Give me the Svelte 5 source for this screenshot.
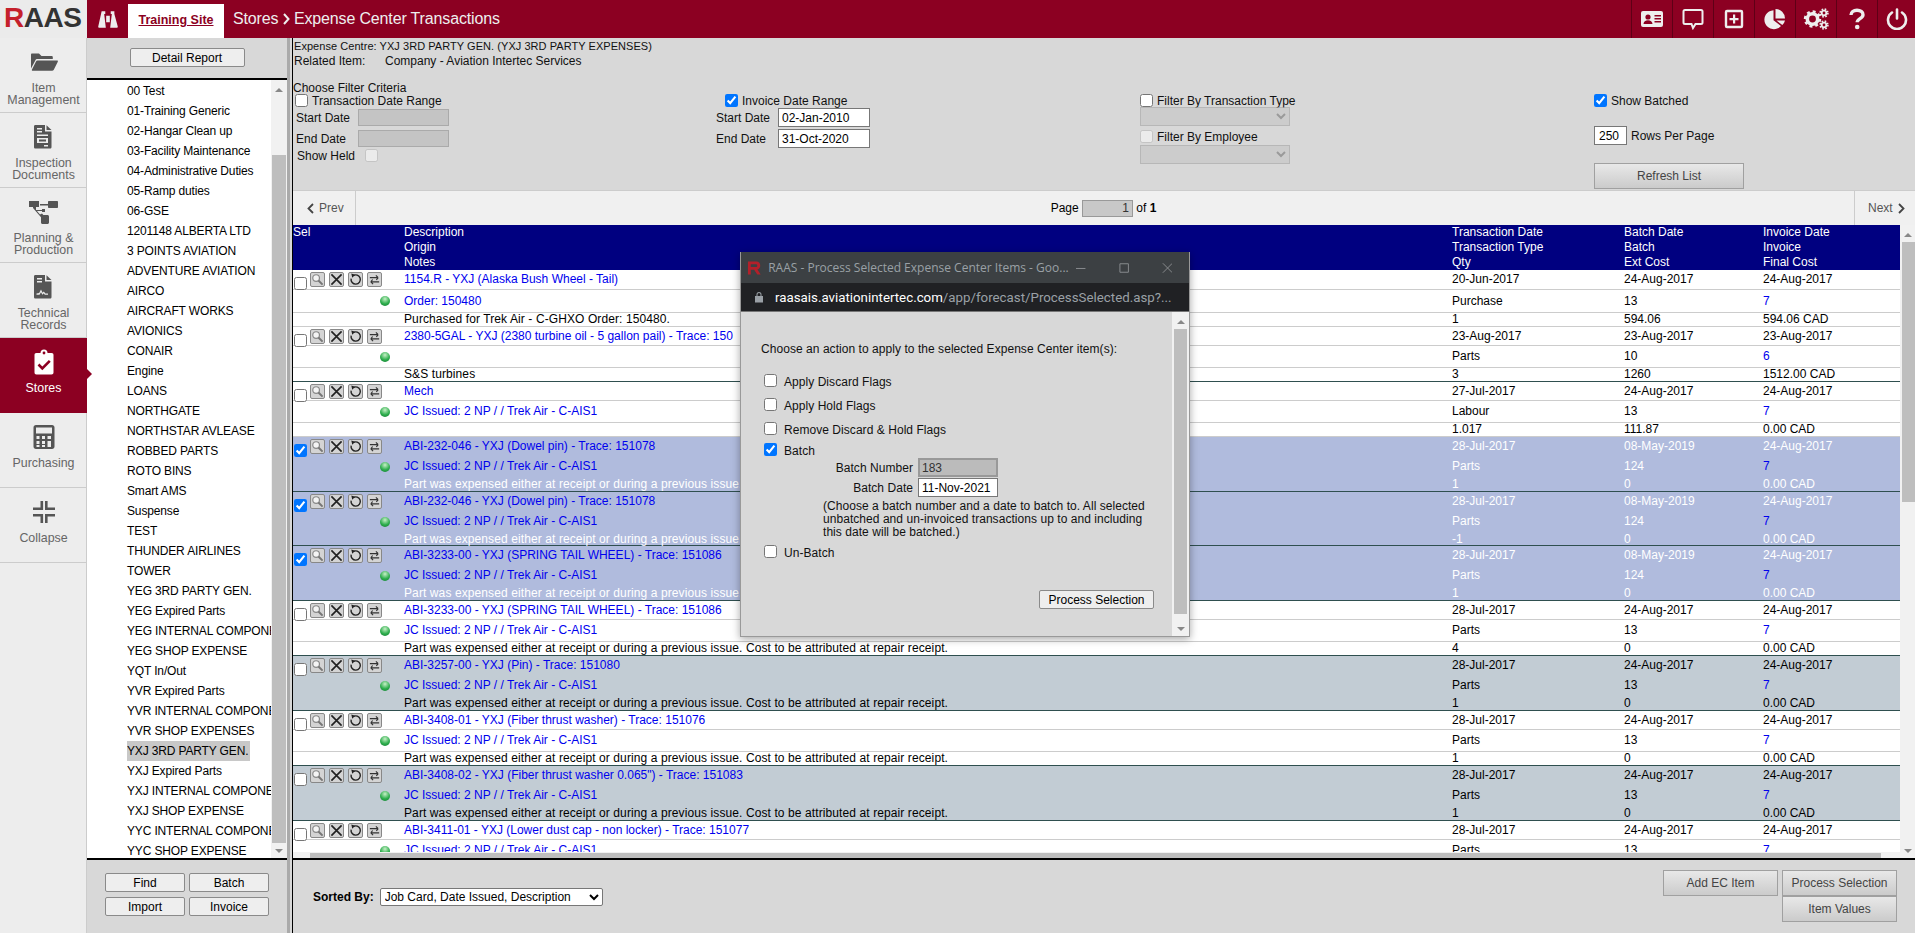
<script lang="ts">
	const sections = [
		{ label: ['Item', 'Management'], icon: 'folder' },
		{ label: ['Inspection', 'Documents'], icon: 'doc' },
		{ label: ['Planning &', 'Production'], icon: 'plan' },
		{ label: ['Technical', 'Records'], icon: 'chart' },
		{ label: ['Stores'], icon: 'clip', active: true },
		{ label: ['Purchasing'], icon: 'calc' },
		{ label: ['Collapse'], icon: 'collapse' }
	];

	const centres = [
		'00 Test', '01-Training Generic', '02-Hangar Clean up', '03-Facility Maintenance',
		'04-Administrative Duties', '05-Ramp duties', '06-GSE', '1201148 ALBERTA LTD',
		'3 POINTS AVIATION', 'ADVENTURE AVIATION', 'AIRCO', 'AIRCRAFT WORKS', 'AVIONICS',
		'CONAIR', 'Engine', 'LOANS', 'NORTHGATE', 'NORTHSTAR AVLEASE', 'ROBBED PARTS',
		'ROTO BINS', 'Smart AMS', 'Suspense', 'TEST', 'THUNDER AIRLINES', 'TOWER',
		'YEG 3RD PARTY GEN.', 'YEG Expired Parts', 'YEG INTERNAL COMPONENTS', 'YEG SHOP EXPENSE',
		'YQT In/Out', 'YVR Expired Parts', 'YVR INTERNAL COMPONENTS', 'YVR SHOP EXPENSES',
		'YXJ 3RD PARTY GEN.', 'YXJ Expired Parts', 'YXJ INTERNAL COMPONENTS', 'YXJ SHOP EXPENSE',
		'YYC INTERNAL COMPONENTS', 'YYC SHOP EXPENSE'
	];

	const jc = 'JC Issued: 2 NP / / Trek Air - C-AIS1';
	const part = 'Part was expensed either at receipt or during a previous issue.';
	const partLong = part + ' Cost to be attributed at repair receipt.';

	const rows = [
		{ kind: 'first', desc: '1154.R - YXJ (Alaska Bush Wheel - Tail)', origin: 'Order: 150480', note: 'Purchased for Trek Air - C-GHXO Order: 150480.', date: '20-Jun-2017', type: 'Purchase', qty: '1', bdate: '24-Aug-2017', batch: '13', ext: '594.06', idate: '24-Aug-2017', inv: '7', cost: '594.06 CAD' },
		{ kind: '', desc: '2380-5GAL - YXJ (2380 turbine oil - 5 gallon pail) - Trace: 150', origin: '', note: 'S&S turbines', date: '23-Aug-2017', type: 'Parts', qty: '3', bdate: '23-Aug-2017', batch: '10', ext: '1260', idate: '23-Aug-2017', inv: '6', cost: '1512.00 CAD' },
		{ kind: 'lt', desc: 'Mech', origin: jc, note: '', date: '27-Jul-2017', type: 'Labour', qty: '1.017', bdate: '24-Aug-2017', batch: '13', ext: '111.87', idate: '24-Aug-2017', inv: '7', cost: '0.00 CAD' },
		{ kind: 'sel', desc: 'ABI-232-046 - YXJ (Dowel pin) - Trace: 151078', origin: jc, note: part, date: '28-Jul-2017', type: 'Parts', qty: '1', bdate: '08-May-2019', batch: '124', ext: '0', idate: '24-Aug-2017', inv: '7', cost: '0.00 CAD' },
		{ kind: 'sel short', desc: 'ABI-232-046 - YXJ (Dowel pin) - Trace: 151078', origin: jc, note: part, date: '28-Jul-2017', type: 'Parts', qty: '-1', bdate: '08-May-2019', batch: '124', ext: '0', idate: '24-Aug-2017', inv: '7', cost: '0.00 CAD' },
		{ kind: 'sel', desc: 'ABI-3233-00 - YXJ (SPRING TAIL WHEEL) - Trace: 151086', origin: jc, note: part, date: '28-Jul-2017', type: 'Parts', qty: '1', bdate: '08-May-2019', batch: '124', ext: '0', idate: '24-Aug-2017', inv: '7', cost: '0.00 CAD' },
		{ kind: '', desc: 'ABI-3233-00 - YXJ (SPRING TAIL WHEEL) - Trace: 151086', origin: jc, note: partLong, date: '28-Jul-2017', type: 'Parts', qty: '4', bdate: '24-Aug-2017', batch: '13', ext: '0', idate: '24-Aug-2017', inv: '7', cost: '0.00 CAD' },
		{ kind: 'alt', desc: 'ABI-3257-00 - YXJ (Pin) - Trace: 151080', origin: jc, note: partLong, date: '28-Jul-2017', type: 'Parts', qty: '1', bdate: '24-Aug-2017', batch: '13', ext: '0', idate: '24-Aug-2017', inv: '7', cost: '0.00 CAD' },
		{ kind: '', desc: 'ABI-3408-01 - YXJ (Fiber thrust washer) - Trace: 151076', origin: jc, note: partLong, date: '28-Jul-2017', type: 'Parts', qty: '1', bdate: '24-Aug-2017', batch: '13', ext: '0', idate: '24-Aug-2017', inv: '7', cost: '0.00 CAD' },
		{ kind: 'alt', desc: 'ABI-3408-02 - YXJ (Fiber thrust washer 0.065") - Trace: 151083', origin: jc, note: partLong, date: '28-Jul-2017', type: 'Parts', qty: '1', bdate: '24-Aug-2017', batch: '13', ext: '0', idate: '24-Aug-2017', inv: '7', cost: '0.00 CAD' },
		{ kind: '', desc: 'ABI-3411-01 - YXJ (Lower dust cap - non locker) - Trace: 151077', origin: jc, note: partLong, date: '28-Jul-2017', type: 'Parts', qty: '1', bdate: '24-Aug-2017', batch: '13', ext: '0', idate: '24-Aug-2017', inv: '7', cost: '0.00 CAD' }
	];
</script>

<div class="page">
	<header class="top">
		<div class="logo"><span class="logo-r">R</span>AAS</div>
		<div class="binoc">
			<svg width="20" height="19" viewBox="0 0 22 20"><path fill="#eee" d="M4 1h4v3h-1.200L8.600 19H1.200c-.6 0-1-.4-1-1zM14 1h4v3l3.800 14c0 .6-.4 1-1 1h-7.400L15.200 4H14zM9 6h4v7H9z"/></svg>
		</div>
		<div class="tab">Training Site</div>
		<div class="title">Stores <svg class="crumb" width="7" height="12" viewBox="0 0 7 12"><path fill="none" stroke="#eee" stroke-width="2" d="M1 1l4.500 5L1 11"/></svg> Expense Center Transactions</div>
		<nav class="tools">
			<button aria-label="Contact card"><svg width="24" height="20" viewBox="0 0 24 20"><rect x="1" y="2" width="22" height="16" rx="2" fill="#eee"/><circle cx="8" cy="8" r="2.600" fill="#8c0022"/><path fill="#8c0022" d="M3.500 15c0-2.500 2-3.800 4.500-3.800s4.500 1.300 4.500 3.800zM14.500 6h6.500v1.500h-6.500zM14.500 9h6.500v1.500h-6.500zM14.500 12h6.500v1.500h-6.500z"/></svg></button>
			<button aria-label="Messages"><svg width="22" height="22" viewBox="0 0 22 22"><path fill="none" stroke="#eee" stroke-width="2" d="M3 2h16a1.500 1.500 0 0 1 1.500 1.500v11A1.500 1.500 0 0 1 19 16h-5.500l-2.500 4-1.500-4H3a1.500 1.500 0 0 1-1.500-1.500v-11A1.500 1.500 0 0 1 3 2z"/></svg></button>
			<button aria-label="Add"><svg width="20" height="20" viewBox="0 0 20 20"><rect x="2" y="2" width="16" height="16" rx="1" fill="none" stroke="#eee" stroke-width="2.400"/><path fill="#eee" d="M9 5.500h2.200V9h3.300v2.200h-3.300v3.300H9v-3.300H5.500V9H9z"/></svg></button>
			<button aria-label="Reports"><svg width="24" height="22" viewBox="0 0 24 22"><path fill="#eee" d="M10.500 2.200A9.500 9.500 0 1 0 18 18l-7.500-5.800zM12.500 1a9.500 9.500 0 0 1 9.500 9.500h-9.500zM13.500 12.500h8.500a9 9 0 0 1-2.700 4.600z"/></svg></button>
			<button aria-label="Settings"><svg width="26" height="22" viewBox="0 0 26 22"><circle cx="9.500" cy="11" r="5.200" fill="none" stroke="#eee" stroke-width="3.600"/><circle cx="9.500" cy="11" r="7.400" fill="none" stroke="#eee" stroke-width="2.600" stroke-dasharray="2.900 2.900"/><circle cx="21" cy="5" r="2.300" fill="none" stroke="#eee" stroke-width="1.800"/><circle cx="21" cy="5" r="3.900" fill="none" stroke="#eee" stroke-width="1.600" stroke-dasharray="1.600 1.500"/><circle cx="21" cy="17" r="2.300" fill="none" stroke="#eee" stroke-width="1.800"/><circle cx="21" cy="17" r="3.900" fill="none" stroke="#eee" stroke-width="1.600" stroke-dasharray="1.600 1.500"/></svg></button>
			<button aria-label="Help"><svg width="16" height="22" viewBox="0 0 16 22"><path fill="none" stroke="#eee" stroke-width="3.400" d="M2 7c0-3 2.500-4.800 6-4.800s6 1.800 6 4.500c0 4-5.800 3.800-5.800 7.600"/><circle cx="8.200" cy="19" r="2.300" fill="#eee"/></svg></button>
			<button aria-label="Log out"><svg width="22" height="22" viewBox="0 0 22 22"><path fill="none" stroke="#eee" stroke-width="2.600" stroke-linecap="round" d="M6 4.500a9 9 0 1 0 10 0M11 1.500v9"/></svg></button>
		</nav>
	</header>

	<div class="body">
		<aside class="side">
			{#each sections as s}
				<div class="side-item" class:active={s.active}>
					<svg class="side-icon" width="32" height="26" viewBox="0 0 32 26">
						{#if s.icon === 'folder'}
							<path d="M3 4.500h8l2.500 2.500h10c.8 0 1.300.5 1.300 1.300V10H9.500c-1 0-1.800.5-2.200 1.400L3 19.500V5.500c0-.5.400-1 1-1zM9.500 11.500H29c.8 0 1.100.6.800 1.200l-4 8c-.4.700-1 1-1.800 1H4.800c-.8 0-1.200-.6-.8-1.300l4-7.900c.3-.6.800-1 1.500-1z"/>
						{:else if s.icon === 'doc'}
							<path d="M7.500 1H17v6.500h6.500V23c0 1-.6 1.500-1.500 1.500H7.500C6.500 24.500 6 24 6 23V2.500C6 1.500 6.500 1 7.500 1zM18.500 1.300l5 4.700h-5zM9 10.500v1.500h11v-1.500zM9 14v5h11v-5zM11 15.500h7v2h-7zM16 21v1.500h4V21zM9 4v1.500h5V4zM9 7v1.500h5V7z" fill-rule="evenodd"/>
						{:else if s.icon === 'plan'}
							<path d="M1 2h10v6H8v3h6v-1h3v3h-3v-1H9l3 3.500 2-1 1.500 1.700V16h4c.8 0 1.500.7 1.500 1.500v6c0 .8-.7 1.500-1.500 1.500h-5c-.8 0-1.500-.7-1.500-1.500v-5.200L5 9V8H1zM21 2h8c.6 0 1 .4 1 1v5c0 .6-.4 1-1 1h-8c-.6 0-1-.4-1-1V3c0-.6.4-1 1-1zM12 5h8v1.500h-8z"/>
						{:else if s.icon === 'chart'}
							<path d="M7.500 1H17v6.500h6.500V23c0 1-.6 1.500-1.500 1.500H7.500C6.500 24.500 6 24 6 23V2.500C6 1.500 6.500 1 7.500 1zM18.500 1.300l5 4.700h-5zM9 4v1.500h5V4zM9 7v1.500h5V7zM8.500 19.500v1.200h3l1.500-2.500 1.500 2.500 1.300-1.500 1 1.500h3.200v-1.200h-2.600l-1.600-2-1.200 1.300-1.600-3.300-1.800 3.500z" fill-rule="evenodd"/>
						{:else if s.icon === 'clip'}
							<path fill="#fff" d="M8.500 4h4a3.500 3.500 0 0 1 7 0h4c1.500 0 2 .7 2 2v17.500c0 1.200-.7 2-2 2h-15c-1.300 0-2-.8-2-2V6c0-1.300.5-2 2-2z"/><circle cx="16" cy="4" r="1.400" fill="#8c0022"/><path fill="none" stroke="#8c0022" stroke-width="2.600" d="M10.500 15.500l3.800 3.800 7.500-7.500"/>
						{:else if s.icon === 'calc'}
							<path fill-rule="evenodd" d="M8 1h16c1.500 0 2.500 1 2.500 2.500v19c0 1.500-1 2.500-2.500 2.500H8c-1.500 0-2.500-1-2.500-2.500v-19C5.500 2 6.500 1 8 1zM8 3.500v6h16v-6zM8.500 12v3h3v-3zM14 12v3h3v-3zM19.500 12v3h3.500v-3zM8.500 17v3h3v-3zM14 17v3h3v-3zM8.500 21v2h3v-2zM14 21v2h3v-2zM19.500 17v6h3.500v-6z"/>
						{:else}
							<path d="M12.500 2h2.600v9H5V8.400h7.500zM17 2h2.600v6.400H27V11H17zM5 15h10.100v9h-2.600v-6.400H5zM17 15h10v2.600h-7.400V24H17z"/>
						{/if}
					</svg>
					{#each s.label as l}<span class="side-label">{l}</span>{/each}
				</div>
			{/each}
		</aside>

		<section class="list-pane">
			<div class="list-head"><button class="soft">Detail Report</button></div>
			<div class="list-box">
				<ul class="centres">
					{#each centres as c}
						<li><span class:picked={c === 'YXJ 3RD PARTY GEN.'}>{c}</span></li>
					{/each}
				</ul>
				<div class="vbar">
					<span class="arrow up"></span>
					<span class="list-thumb"></span>
					<span class="arrow down"></span>
				</div>
			</div>
			<div class="list-foot">
				<button class="soft">Find</button>
				<button class="soft">Batch</button>
				<button class="soft">Import</button>
				<button class="soft">Invoice</button>
			</div>
		</section>

		<main class="main">
			<div class="filters">
				<div class="info">
					<div class="centre-line">Expense Centre: YXJ 3RD PARTY GEN. (YXJ 3RD PARTY EXPENSES)</div>
					<div class="related"><span class="rel-label">Related Item:</span>Company - Aviation Intertec Services</div>
				</div>
				<div class="crit">Choose Filter Criteria</div>
				<div class="filter-cols">
					<div class="col col-a">
						<label class="chk"><input type="checkbox" />Transaction Date Range</label>
						<div class="date-row"><span>Start Date</span><input class="off" disabled /></div>
						<div class="date-row"><span>End Date</span><input class="off" disabled /></div>
						<label class="chk held">Show Held<input type="checkbox" disabled /></label>
					</div>
					<div class="col col-b">
						<label class="chk"><input type="checkbox" checked />Invoice Date Range</label>
						<div class="date-row"><span>Start Date</span><input value="02-Jan-2010" /></div>
						<div class="date-row"><span>End Date</span><input value="31-Oct-2020" /></div>
					</div>
					<div class="col col-c">
						<label class="chk"><input type="checkbox" />Filter By Transaction Type</label>
						<select class="off-sel" disabled><option></option></select>
						<label class="chk emp"><input type="checkbox" disabled />Filter By Employee</label>
						<select class="off-sel" disabled><option></option></select>
					</div>
					<div class="col col-d">
						<label class="chk"><input type="checkbox" checked />Show Batched</label>
						<div class="rows-row"><input value="250" /><span>Rows Per Page</span></div>
						<button class="grad refresh">Refresh List</button>
					</div>
				</div>
			</div>

			<div class="pager">
				<div class="prev"><svg width="7" height="11" viewBox="0 0 7 11"><path fill="none" stroke="#444" stroke-width="1.800" d="M6 1L1.500 5.500 6 10"/></svg> Prev</div>
				<div class="pages">Page <input class="page-num" value="1" disabled /> of <b>1</b></div>
				<div class="next">Next <svg width="7" height="11" viewBox="0 0 7 11"><path fill="none" stroke="#444" stroke-width="1.800" d="M1 1l4.500 4.500L1 10"/></svg></div>
			</div>

			<div class="grid-wrap">
				<div class="grid-scroll">
					<div class="thead">
						<div class="l3"><span>Sel</span><span>Description</span><span>Transaction Date</span><span>Batch Date</span><span>Invoice Date</span></div>
						<div class="l3"><span></span><span>Origin</span><span>Transaction Type</span><span>Batch</span><span>Invoice</span></div>
						<div class="l3"><span></span><span>Notes</span><span>Qty</span><span>Ext Cost</span><span>Final Cost</span></div>
					</div>
					{#each rows as r}
						<div class="row {r.kind}">
							<div class="line line1">
								<span class="acts">
									<input type="checkbox" checked={r.kind.startsWith('sel')} />
									<i class="ib"><svg viewBox="0 0 14 14"><circle cx="5.500" cy="5.500" r="3.600" fill="#f4f4f4" stroke="#888" stroke-width="1.300"/><path stroke="#777" stroke-width="2.200" d="M8 8l4.500 4.500"/></svg></i>
									<i class="ib"><svg viewBox="0 0 14 14"><path stroke="#222" stroke-width="1.800" d="M1.500 1.500l11 11M12.500 1.500l-11 11"/></svg></i>
									<i class="ib"><svg viewBox="0 0 14 14"><path fill="none" stroke="#222" stroke-width="1.500" d="M4.500 2.800A5 5 0 1 1 2.300 6"/><path fill="#222" d="M2.500 0.500l4 1.500-3 3z"/></svg></i>
									<i class="ib"><svg viewBox="0 0 14 14"><path fill="none" stroke="#333" stroke-width="1.200" d="M2 5h9M8.500 2.500L11 5M12 9.500H3M5.500 12L3 9.500M11 5l-2 2.500M3 9.500l2-2.500"/></svg></i>
								</span>
								<a href="#top">{r.desc}</a><span>{r.date}</span><span>{r.bdate}</span><span>{r.idate}</span>
							</div>
							<div class="line line2">
								<span class="dot"><i></i></span>
								<a href="#top">{r.origin}</a><span>{r.type}</span><span>{r.batch}</span><a href="#top">{r.inv}</a>
							</div>
							<div class="line line3">
								<span></span><span class="note">{r.note}</span><span>{r.qty}</span><span>{r.ext}</span><span>{r.cost}</span>
							</div>
						</div>
					{/each}
				</div>
				<div class="grid-v">
					<span class="arrow up"></span>
					<span class="grid-thumb"></span>
					<span class="arrow down"></span>
				</div>
				<div class="grid-h"><span class="grid-hthumb"></span></div>
			</div>

			<div class="foot">
				<div class="sort"><b>Sorted By:</b>
					<select><option>Job Card, Date Issued, Description</option></select>
				</div>
				<div class="foot-btns">
					<button class="grad">Add EC Item</button>
					<div class="stack">
						<button class="grad">Process Selection</button>
						<button class="grad">Item Values</button>
					</div>
				</div>
			</div>
		</main>
	</div>

	<div class="popup">
		<div class="pop-title">
			<svg width="15" height="16" viewBox="0 0 15 16"><path fill="#b3202a" d="M1 1h9c2.800 0 4 1.800 4 4.300 0 2.200-1 3.700-3 4.200l3.500 5.500h-3.600L7.600 9.800H4V15H1zM4 4v3h5.500c.9 0 1.400-.6 1.400-1.500S10.400 4 9.500 4z"/></svg>
			<span class="pop-name">RAAS - Process Selected Expense Center Items - Goo...</span>
			<svg class="winctl" width="102" height="12" viewBox="0 0 102 12"><path stroke="#8b8e92" stroke-width="1" fill="none" d="M0 6.500h10M46.500 1.500h9v9h-9zM92 1l10 10M102 1L92 11"/></svg>
		</div>
		<div class="pop-url">
			<svg width="10" height="12" viewBox="0 0 10 12"><path fill="#9aa0a6" d="M1 5h8v6.500H1zM2.500 5V3.500a2.500 2.500 0 0 1 5 0V5h-1V3.500a1.500 1.500 0 0 0-3 0V5z"/></svg>
			<span class="host">raasais.aviationintertec.com</span><span class="path">/app/forecast/ProcessSelected.asp?...</span>
		</div>
		<div class="pop-body">
			<div class="pop-form">
				<p class="pop-lead">Choose an action to apply to the selected Expense Center item(s):</p>
				<label class="pop-chk"><input type="checkbox" />Apply Discard Flags</label>
				<label class="pop-chk"><input type="checkbox" />Apply Hold Flags</label>
				<label class="pop-chk"><input type="checkbox" />Remove Discard &amp; Hold Flags</label>
				<label class="pop-chk batch"><input type="checkbox" checked />Batch</label>
				<div class="batch-row"><span>Batch Number</span><input class="num" value="183" disabled /></div>
				<div class="batch-row"><span>Batch Date</span><input value="11-Nov-2021" /></div>
				<p class="pop-help">(Choose a batch number and a date to batch to. All selected unbatched and un-invoiced transactions up to and including this date will be batched.)</p>
				<label class="pop-chk unbatch"><input type="checkbox" />Un-Batch</label>
				<div class="pop-actions"><button class="soft">Process Selection</button></div>
			</div>
			<div class="pop-bar">
				<span class="arrow up"></span>
				<span class="pop-thumb"></span>
				<span class="arrow down"></span>
			</div>
		</div>
	</div>
</div>

<style>
	:global(body) {
		margin: 0;
		font-family: "Liberation Sans", Arial, sans-serif;
		font-size: 12px;
		color: #000;
	}

	.page {
		position: relative;
		width: 1915px;
		height: 933px;
		overflow: hidden;
		background: #d8d8d8;
		display: flex;
		flex-direction: column;
	}

	button, input, select {
		font-family: inherit;
		font-size: 12px;
		box-sizing: border-box;
	}

	input[type='checkbox'] {
		width: 13px;
		height: 13px;
		margin: 0;
		flex: none;
	}

	/* header */
	.top {
		height: 38px;
		flex: none;
		display: flex;
		background: #8c0022;
		color: #eee;
	}

	.logo {
		width: 87px;
		flex: none;
		background: #ebebeb;
		box-sizing: border-box;
		padding: 3px 0 0 4px;
		font-size: 28px;
		line-height: 30px;
		font-weight: 700;
		letter-spacing: -0.5px;
		color: #333;
	}

	.logo-r {
		color: #c5202b;
	}

	.binoc {
		width: 41px;
		flex: none;
		display: flex;
		align-items: center;
		justify-content: center;
	}

	.tab {
		width: 96px;
		margin-top: 4px;
		background: #fff;
		color: #8c0022;
		font-size: 12.5px;
		font-weight: 700;
		text-decoration: underline;
		text-align: center;
		line-height: 32px;
		flex: none;
	}

	.title {
		margin-left: 9px;
		font-size: 16px;
		line-height: 38px;
		letter-spacing: -0.15px;
		flex: 1;
	}

	.crumb {
		margin: 0;
		vertical-align: -1px;
	}

	.tools {
		display: flex;
	}

	.tools button {
		width: 41px;
		height: 38px;
		padding: 0;
		background: none;
		border: 0;
		border-left: 1px solid #5e0016;
		display: flex;
		align-items: center;
		justify-content: center;
	}

	.tools button:last-child {
		width: 38px;
	}

	.body {
		flex: 1;
		display: flex;
		min-height: 0;
	}

	/* left rail */
	.side {
		width: 87px;
		flex: none;
		background: #ededed;
		box-sizing: border-box;
		border-right: 1px solid #ccc;
	}

	.side-item {
		position: relative;
		height: 75px;
		box-sizing: border-box;
		border-bottom: 1px solid #ccc;
		padding-top: 11px;
		margin-right: -1px;
		display: flex;
		flex-direction: column;
		align-items: center;
		color: #666;
	}

	.side-icon {
		fill: #555;
		margin-bottom: 7px;
	}

	.side-label {
		font-size: 12.4px;
		line-height: 12px;
		white-space: nowrap;
	}

	.side-item.active {
		background: #8c0022;
		color: #fff;
		border-bottom-color: #8c0022;
	}

	.side-item.active::after {
		content: '';
		position: absolute;
		right: -5px;
		top: 31px;
		border-left: 5px solid #8c0022;
		border-top: 5px solid transparent;
		border-bottom: 5px solid transparent;
	}

	/* expense centre list */
	.list-pane {
		width: 200px;
		flex: none;
		display: flex;
		flex-direction: column;
		border-right: 3px solid #aaa;
		margin-right: 3px;
	}

	.list-head {
		height: 40px;
		flex: none;
		display: flex;
		justify-content: center;
		padding-top: 10px;
		box-sizing: border-box;
	}

	.list-head .soft {
		width: 115px;
		height: 19px;
	}

	.list-box {
		flex: 1;
		min-height: 0;
		display: flex;
		background: #fff;
		border-top: 2px solid #000;
		border-bottom: 2px solid #000;
		overflow: hidden;
	}

	.centres {
		flex: 1;
		min-width: 0;
		margin: 0;
		padding: 1px 0 0 40px;
		list-style: none;
		overflow: hidden;
		letter-spacing: -0.15px;
	}

	.centres li {
		height: 20px;
		line-height: 20px;
		white-space: nowrap;
	}

	.centres li span {
		display: inline-block;
	}

	.picked {
		background: #c8c8c8;
		min-width: 123px;
	}

	.vbar {
		position: relative;
		width: 16px;
		flex: none;
		background: #f1f1f1;
	}

	.list-thumb {
		position: absolute;
		left: 1px;
		right: 1px;
		top: 75px;
		bottom: 15px;
		background: #bebebe;
	}

	.arrow {
		position: absolute;
		left: 50%;
		margin-left: -4px;
		border-left: 4px solid transparent;
		border-right: 4px solid transparent;
	}

	.arrow.up {
		top: 8px;
		border-bottom: 4px solid #888;
	}

	.arrow.down {
		bottom: 5px;
		border-top: 4px solid #888;
	}

	.list-foot {
		height: 73px;
		flex: none;
		box-sizing: border-box;
		padding: 13px 0 0 18px;
		display: grid;
		grid-template-columns: 80px 80px;
		grid-auto-rows: 19px;
		gap: 5px 4px;
	}

	.soft {
		background: #eee;
		border: 1px solid #8a8a8a;
		border-radius: 2px;
		padding: 0;
		color: #000;
	}

	.grad {
		background: linear-gradient(#e8e8e8, #cbcbcb);
		border: 1px solid #a0a0a0;
		color: #444;
		padding: 0;
	}

	/* main column */
	.main {
		flex: 1;
		min-width: 0;
		display: flex;
		flex-direction: column;
		border-left: 1px solid #000;
		margin-left: -1px;
	}

	.filters {
		height: 152px;
		flex: none;
		box-sizing: border-box;
		padding-top: 1px;
		line-height: 15px;
		color: #111;
	}

	.info {
		padding-left: 1px;
	}

	.centre-line {
		font-size: 11px;
		letter-spacing: 0.05px;
	}

	.related {
		display: flex;
	}

	.rel-label {
		width: 91px;
	}

	.crit {
		margin-top: 12px;
		line-height: 15px;
	}

	.filter-cols {
		display: grid;
		grid-template-columns: 423px 424px 454px 1fr;
		margin-top: -2px;
	}

	.chk {
		display: flex;
		align-items: flex-start;
		gap: 4px;
		height: 13px;
		line-height: 15px;
	}

	.col-a .chk {
		padding-left: 2px;
	}

	.col-a .date-row {
		padding-left: 3px;
	}

	.date-row {
		display: flex;
		align-items: center;
		height: 19px;
		margin-bottom: 2px;
	}

	.chk + .date-row {
		margin-top: 1px;
	}

	.date-row span {
		width: 62px;
		padding-top: 2px;
	}

	.date-row input {
		width: 92px;
		height: 19px;
		border: 1px solid #777;
		padding: 0 3px;
		background: #fff;
		border-radius: 0;
	}

	.date-row input.off {
		height: 17px;
		width: 91px;
		background: #c4c4c4;
		border-color: #aaa;
	}

	.col-a .held {
		padding-left: 4px;
		gap: 10px;
		margin-top: -1px;
	}

	.col-b .chk {
		padding-left: 9px;
	}

	.off-sel {
		display: block;
		width: 150px;
		height: 19px;
		background: #c8c8c8;
		border: 1px solid #aaa;
		border-radius: 0;
	}

	.emp {
		margin: 4px 0 2px;
	}

	.rows-row {
		display: flex;
		align-items: center;
		gap: 4px;
		margin-top: 19px;
		height: 19px;
	}

	.rows-row span {
		padding-top: 2px;
	}

	.rows-row input {
		width: 33px;
		height: 19px;
		border: 1px solid #777;
		padding: 0 4px;
	}

	.refresh {
		display: block;
		width: 150px;
		height: 26px;
		margin-top: 18px;
	}

	/* pager */
	.pager {
		height: 35px;
		flex: none;
		box-sizing: border-box;
		background: #f0f0f0;
		border-top: 1px solid #ccc;
		display: flex;
		align-items: center;
		color: #555;
	}

	.prev {
		width: 63px;
		height: 100%;
		box-sizing: border-box;
		border-right: 1px solid #ccc;
		display: flex;
		align-items: center;
		gap: 5px;
		padding-left: 14px;
		flex: none;
	}

	.pages {
		flex: 1;
		text-align: center;
		color: #000;
		padding-right: 3px;
	}

	.page-num {
		width: 51px;
		height: 17px;
		text-align: right;
		background: #c8c8c8;
		border: 1px solid #999;
		padding: 0 3px;
		vertical-align: middle;
		color: #333;
	}

	.next {
		width: 61px;
		height: 100%;
		box-sizing: border-box;
		border-left: 1px solid #ccc;
		display: flex;
		align-items: center;
		gap: 5px;
		padding-left: 13px;
		flex: none;
	}

	/* transactions table */
	.grid-wrap {
		position: relative;
		flex: 1;
		min-height: 0;
		background: #f1f1f1;
		border-bottom: 2px solid #000;
		overflow: hidden;
	}

	.grid-scroll {
		position: absolute;
		left: 0;
		top: 0;
		width: 1607px;
		bottom: 6px;
		background: #fff;
		overflow: hidden;
	}

	.thead {
		background: #000080;
		color: #fff;
		height: 45px;
	}

	.l3, .line {
		display: grid;
		grid-template-columns: 111px 1048px 172px 139px 137px;
		white-space: nowrap;
	}

	.l3 {
		height: 15px;
		line-height: 15px;
	}

	.row {
		border-bottom: 1px solid #2f4f4f;
		box-sizing: border-box;
		height: 55px;
		line-height: 13px;
	}

	.row.short {
		height: 54px;
	}

	.row.first {
		height: 57px;
		border-bottom-color: #ccc;
	}

	.row.lt {
		border-bottom-color: #ccc;
	}

	.line {
		box-sizing: border-box;
		align-items: center;
	}

	.line1 {
		height: 19px;
		padding-bottom: 2px;
		border-bottom: 1px solid #ccc;
	}

	.line2 {
		height: 22px;
		border-bottom: 1px solid #ccc;
	}

	.first .line1 {
		height: 20px;
		padding-bottom: 0;
	}

	.first .line2 {
		height: 23px;
	}

	.row.sel .line, .row.alt .line {
		border-bottom-color: transparent;
	}

	.row.sel {
		background: #b0bbdd;
		color: #fff;
	}

	.row.alt {
		background: #c2ccd4;
	}

	a {
		color: #0000ee;
		text-decoration: none;
	}

	.acts {
		display: flex;
		align-items: flex-start;
		align-self: start;
		height: 19px;
		padding-left: 1px;
		gap: 2px;
	}

	.acts input {
		margin-top: 7px;
	}

	.ib {
		display: block;
		width: 15px;
		height: 15px;
		margin: 2px 1px 0;
		box-sizing: border-box;
		background: #d4d4d4;
		border: 1px solid #888;
		border-radius: 2px;
	}

	.ib svg {
		display: block;
		width: 13px;
		height: 13px;
	}

	.dot {
		display: flex;
		justify-content: flex-end;
		padding-right: 14px;
	}

	.dot i {
		width: 10px;
		height: 10px;
		border-radius: 50%;
		background: radial-gradient(circle at 50% 30%, #c6f0c6, #2fae4e 55%, #0f7a30);
	}

	.note {
		overflow: hidden;
		letter-spacing: 0.1px;
	}

	.grid-v {
		position: absolute;
		top: 0;
		right: 0;
		width: 15px;
		bottom: 0;
		background: #f1f1f1;
	}

	.grid-thumb {
		position: absolute;
		left: 2px;
		right: 0;
		top: 17px;
		height: 260px;
		background: #bebebe;
	}

	.grid-h {
		position: absolute;
		left: 0;
		right: 15px;
		bottom: 0;
		height: 6px;
		background: #f1f1f1;
	}

	.grid-hthumb {
		position: absolute;
		left: 17px;
		right: 19px;
		top: 1px;
		bottom: 0;
		background: #bebebe;
	}

	/* footer */
	.foot {
		height: 73px;
		flex: none;
		display: flex;
		justify-content: space-between;
		box-sizing: border-box;
	}

	.sort {
		display: flex;
		align-items: center;
		gap: 6px;
		padding: 0 0 1px 20px;
		height: 73px;
	}

	.sort select {
		width: 223px;
		height: 18px;
		background: #fff;
		border: 1px solid #777;
		border-radius: 2px;
	}

	.foot-btns {
		display: flex;
		gap: 4px;
		padding: 10px 18px 0 0;
	}

	.foot-btns .grad {
		display: block;
		width: 115px;
		height: 26px;
	}

	/* process selection window */
	.popup {
		position: absolute;
		left: 740px;
		top: 252px;
		width: 450px;
		height: 385px;
		background: #d8d8d8;
		border: 1px solid #999;
		border-top: 0;
		box-sizing: border-box;
		box-shadow: 0 2px 8px rgba(0, 0, 0, 0.35);
		display: flex;
		flex-direction: column;
	}

	.pop-title {
		height: 31px;
		flex: none;
		background: #3c4043;
		display: flex;
		align-items: center;
		padding: 0 17px 0 6px;
		gap: 7px;
		color: #9aa0a6;
	}

	.pop-name {
		flex: 1;
		white-space: nowrap;
		font-family: "Open Sans", "Liberation Sans", sans-serif;
		font-size: 12px;
	}

	.pop-url {
		height: 28px;
		flex: none;
		background: #202124;
		display: flex;
		align-items: center;
		padding-left: 13px;
		font-family: Roboto, "Liberation Sans", sans-serif;
		font-size: 13.3px;
		color: #9aa0a6;
		white-space: nowrap;
	}

	.pop-url svg {
		margin-right: 11px;
	}

	.host {
		color: #fff;
	}

	.pop-body {
		flex: 1;
		min-height: 0;
		display: flex;
		border-top: 1px solid #777;
	}

	.pop-form {
		flex: 1;
		padding: 0 0 0 20px;
		position: relative;
		color: #111;
		letter-spacing: 0.05px;
	}

	.pop-lead {
		margin: 30px 0 0;
		line-height: 14px;
	}

	.pop-chk {
		display: flex;
		align-items: flex-start;
		gap: 7px;
		height: 13px;
		line-height: 15px;
		margin: 11px 0 0 3px;
	}

	.pop-chk input {
		margin-top: -1px;
	}

	.pop-lead + .pop-chk {
		margin-top: 19px;
	}

	.pop-chk.batch {
		margin-top: 8px;
	}

	.batch-row {
		display: flex;
		align-items: center;
		gap: 5px;
		height: 19px;
		margin-top: 1px;
	}

	.batch-row span {
		width: 152px;
		text-align: right;
		white-space: nowrap;
	}

	.batch-row input {
		width: 80px;
		height: 19px;
		border: 1px solid #777;
		padding: 0 3px;
		background: #fff;
		color: #000;
	}

	.batch-row input.num {
		background: #bbb;
		border: 2px solid #999;
		padding: 0 2px;
		color: #333;
	}

	.pop-help {
		margin: 3px 0 0 62px;
		width: 330px;
		line-height: 13px;
	}

	.pop-chk.unbatch {
		margin-top: 7px;
	}

	.pop-actions {
		position: absolute;
		right: 18px;
		top: 278px;
	}

	.pop-actions .soft {
		width: 115px;
		height: 19px;
	}

	.pop-bar {
		position: relative;
		width: 17px;
		flex: none;
		background: #f1f1f1;
	}

	.pop-thumb {
		position: absolute;
		left: 2px;
		right: 2px;
		top: 17px;
		bottom: 22px;
		background: #bebebe;
	}
</style>
